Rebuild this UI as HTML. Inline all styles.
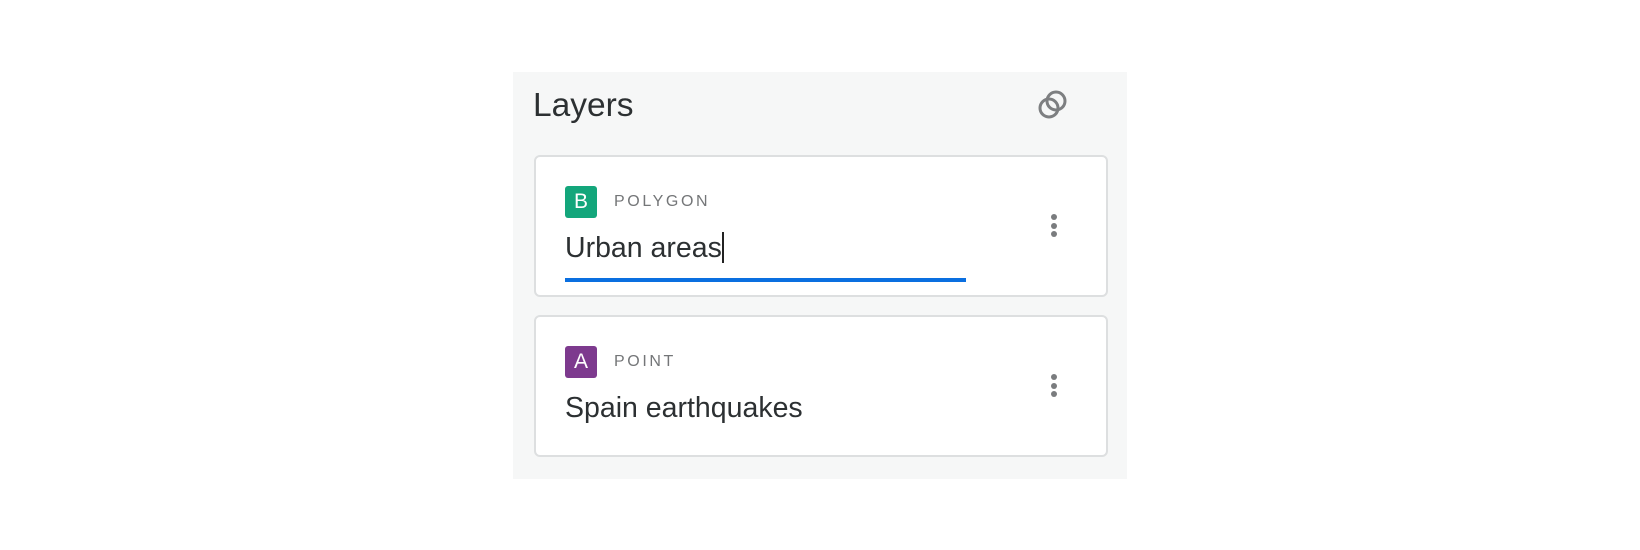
<!DOCTYPE html>
<html><head><style>
*{margin:0;padding:0;box-sizing:border-box}
body{width:1640px;height:550px;background:#fff;font-family:"Liberation Sans",sans-serif;position:relative;overflow:hidden}
.panel{position:absolute;left:513px;top:72px;width:614px;height:407px;background:#f6f7f7}
.title{position:absolute;left:533px;top:87px;font-size:33.5px;color:#2c3032}
.card{position:absolute;left:534px;width:574px;height:142px;background:#fff;border:2px solid #dddfe0;border-radius:6px}
.badge{position:absolute;left:29px;width:32px;height:32px;border-radius:3px;color:#fff;font-size:21px;text-align:center;line-height:32px}
.lbl{position:absolute;left:78px;font-size:16px;letter-spacing:2.6px;color:#747678}
.name{position:absolute;left:29px;font-size:28.5px;color:#2c3032}
.dots{position:absolute;left:515px;width:6px}
.dots i{display:block;width:6px;height:6px;border-radius:50%;background:#7a7c7e;margin-bottom:2.5px}
</style></head><body>
<div class="panel"></div>
<div class="title">Layers</div>
<svg style="position:absolute;left:1036px;top:88px" width="34" height="34" viewBox="0 0 34 34" fill="none" stroke="#7d7f81" stroke-width="3"><circle cx="13" cy="20" r="9"/><circle cx="20" cy="13" r="9"/></svg>
<div class="card" style="top:155px">
 <div class="badge" style="top:29px;background:#13a67b">B</div>
 <div class="lbl" style="top:36px">POLYGON</div>
 <div class="name" style="top:75px">Urban areas<span style="display:inline-block;width:2px;height:31px;background:#222;vertical-align:-6px"></span></div>
 <div style="position:absolute;left:29px;top:121px;width:401px;height:4px;background:#0a6fe0"></div>
 <div class="dots" style="top:57px"><i></i><i></i><i></i></div>
</div>
<div class="card" style="top:315px">
 <div class="badge" style="top:29px;background:#7d3a8e">A</div>
 <div class="lbl" style="top:36px">POINT</div>
 <div class="name" style="top:75px">Spain earthquakes</div>
 <div class="dots" style="top:57px"><i></i><i></i><i></i></div>
</div>
</body></html>
